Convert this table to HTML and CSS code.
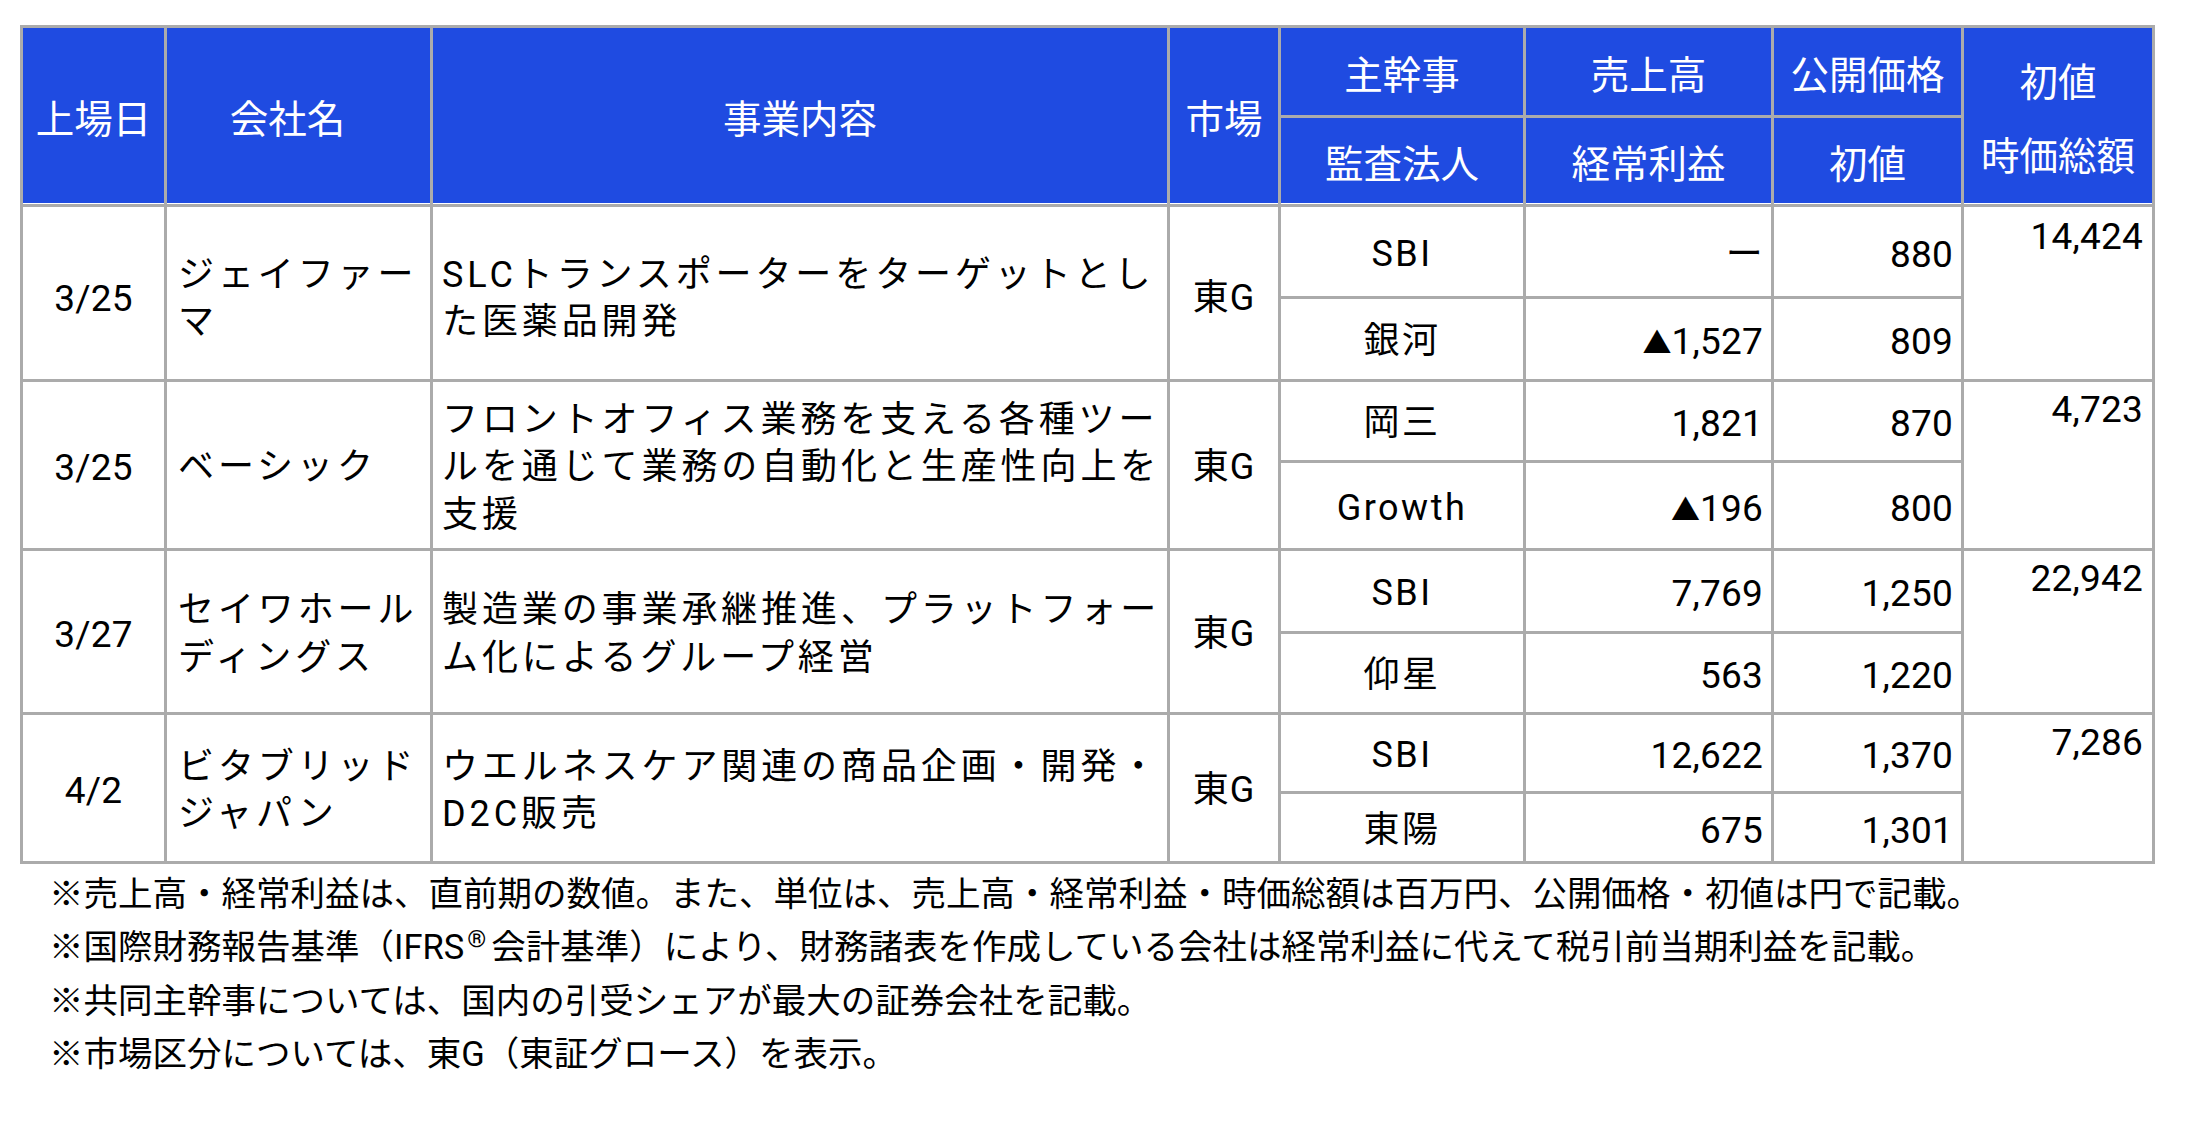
FILE: index.html
```html
<!DOCTYPE html>
<html lang="ja">
<head>
<meta charset="utf-8">
<title>IPO</title>
<link rel="stylesheet" href="styles.css">
</head>
<body>
<div class="page">
  <table class="ipo">
    <colgroup>
      <col class="c-date"><col class="c-name"><col class="c-desc"><col class="c-mkt">
      <col class="c-firm"><col class="c-sales"><col class="c-price"><col class="c-cap">
    </colgroup>
    <thead>
      <tr class="h1">
        <th rowspan="2" class="hb">上場日</th>
        <th rowspan="2" class="hb h-name">会社名</th>
        <th rowspan="2" class="hb">事業内容</th>
        <th rowspan="2" class="hb">市場</th>
        <th>主幹事</th>
        <th>売上高</th>
        <th>公開価格</th>
        <th rowspan="2" class="hb cap-h"><span class="l1">初値</span><span class="l2">時価総額</span></th>
      </tr>
      <tr class="h2">
        <th class="hb">監査法人</th>
        <th class="hb">経常利益</th>
        <th class="hb">初値</th>
      </tr>
    </thead>
    <tbody>
      <tr class="r1a">
        <td rowspan="2" class="date">3/25</td>
        <td rowspan="2" class="name">ジェイファー<br>マ</td>
        <td rowspan="2" class="desc">SLCトランスポーターをターゲットとし<br>た医薬品開発</td>
        <td rowspan="2" class="mkt">東G</td>
        <td class="firm">SBI</td>
        <td class="num">ー</td>
        <td class="num">880</td>
        <td rowspan="2" class="cap">14,424</td>
      </tr>
      <tr class="r1b">
        <td class="firm">銀河</td>
        <td class="num"><span class="tri">▲</span>1,527</td>
        <td class="num">809</td>
      </tr>
      <tr class="r2a">
        <td rowspan="2" class="date">3/25</td>
        <td rowspan="2" class="name">ベーシック</td>
        <td rowspan="2" class="desc">フロントオフィス業務を支える各種ツー<br>ルを通じて業務の自動化と生産性向上を<br>支援</td>
        <td rowspan="2" class="mkt">東G</td>
        <td class="firm">岡三</td>
        <td class="num">1,821</td>
        <td class="num">870</td>
        <td rowspan="2" class="cap">4,723</td>
      </tr>
      <tr class="r2b">
        <td class="firm">Growth</td>
        <td class="num"><span class="tri">▲</span>196</td>
        <td class="num">800</td>
      </tr>
      <tr class="r3a">
        <td rowspan="2" class="date">3/27</td>
        <td rowspan="2" class="name">セイワホール<br>ディングス</td>
        <td rowspan="2" class="desc">製造業の事業承継推進、プラットフォー<br>ム化によるグループ経営</td>
        <td rowspan="2" class="mkt">東G</td>
        <td class="firm">SBI</td>
        <td class="num">7,769</td>
        <td class="num">1,250</td>
        <td rowspan="2" class="cap">22,942</td>
      </tr>
      <tr class="r3b">
        <td class="firm">仰星</td>
        <td class="num">563</td>
        <td class="num">1,220</td>
      </tr>
      <tr class="r4a">
        <td rowspan="2" class="date">4/2</td>
        <td rowspan="2" class="name">ビタブリッド<br>ジャパン</td>
        <td rowspan="2" class="desc">ウエルネスケア関連の商品企画・開発・<br>D2C販売</td>
        <td rowspan="2" class="mkt">東G</td>
        <td class="firm">SBI</td>
        <td class="num">12,622</td>
        <td class="num">1,370</td>
        <td rowspan="2" class="cap">7,286</td>
      </tr>
      <tr class="r4b">
        <td class="firm">東陽</td>
        <td class="num">675</td>
        <td class="num">1,301</td>
      </tr>
    </tbody>
  </table>
  <div class="notes">
    <p>※売上高・経常利益は、直前期の数値。また、単位は、売上高・経常利益・時価総額は百万円、公開価格・初値は円で記載。</p>
    <p>※国際財務報告基準（IFRS<sup class="reg">®</sup>会計基準）により、財務諸表を作成している会社は経常利益に代えて税引前当期利益を記載。</p>
    <p>※共同主幹事については、国内の引受シェアが最大の証券会社を記載。</p>
    <p>※市場区分については、東G（東証グロース）を表示。</p>
  </div>
</div>
</body>
</html>
```

FILE: styles.css
```css
html, body {
  margin: 0;
  padding: 0;
  background: #ffffff;
}

body {
  font-family: Roboto, "Noto Sans CJK JP", sans-serif;
  color: #000000;
}

.page {
  padding: 25px 0 0 20px;
}

.ipo {
  border-collapse: collapse;
  table-layout: fixed;
  width: 2132px;
  border: 3px solid #ababab;
}

.c-date { width: 144px; }
.c-name { width: 266px; }
.c-desc { width: 737px; }
.c-mkt { width: 111px; }
.c-firm { width: 245px; }
.c-sales { width: 248px; }
.c-price { width: 190px; }
.c-cap { width: 191px; }

.ipo th,
.ipo td {
  border: 3px solid #ababab;
  padding: 0;
  vertical-align: middle;
}

.ipo th {
  background: #1f4be1;
  color: #ffffff;
  font-weight: normal;
  font-size: 38.5px;
  line-height: 46px;
  text-align: center;
  font-family: "Noto Sans CJK JP", sans-serif;
}

.ipo th.hb {
  box-shadow: inset 0 -1px 0 #ffffff;
}

.ipo th.h-name {
  padding-right: 22px;
}

.cap-h .l1,
.cap-h .l2 {
  display: block;
}

.cap-h .l1 {
  margin-bottom: 28px;
}

.h1 { height: 90px; }
.h2 { height: 89px; }
.r1a { height: 92px; }
.r1b { height: 83px; }
.r2a { height: 81px; }
.r2b { height: 88px; }
.r3a { height: 83px; }
.r3b { height: 81px; }
.r4a { height: 79px; }
.r4b { height: 70px; }

.ipo td {
  font-size: 36px;
  line-height: 47.5px;
  letter-spacing: 3.9px;
  padding-top: 6px;
}

.ipo td.date,
.ipo td.mkt,
.ipo td.firm {
  text-align: center;
}

.ipo td.firm {
  letter-spacing: 2.5px;
}

.ipo td.mkt {
  letter-spacing: 1px;
}

.ipo td.date,
.ipo td.num,
.ipo td.cap {
  font-size: 37px;
  letter-spacing: 0.2px;
}

.ipo td.name,
.ipo td.desc {
  text-align: left;
  white-space: nowrap;
  padding-right: 6px;
  padding-left: 11px;
}

.ipo td.desc {
  padding-left: 9px;
}

.ipo td.num {
  text-align: right;
  padding-right: 8px;
}

.ipo .r1a td[rowspan] {
  padding-top: 12px;
}

.ipo td.cap {
  text-align: right;
  vertical-align: top;
  padding-top: 4px;
  padding-right: 9px;
}

.ipo .r1a td.cap {
  padding-top: 6px;
}

.tri {
  font-family: "Noto Sans CJK JP", sans-serif;
  font-size: 29px;
  letter-spacing: 0;
}

.notes {
  padding: 4px 0 0 29px;
  font-size: 34.5px;
  line-height: 53.3px;
}

.notes p {
  margin: 0;
  white-space: nowrap;
}

.reg {
  font-size: 0.7em;
  line-height: 0;
  vertical-align: 0.5em;
  margin: 0 5px 0 3px;
}
```
